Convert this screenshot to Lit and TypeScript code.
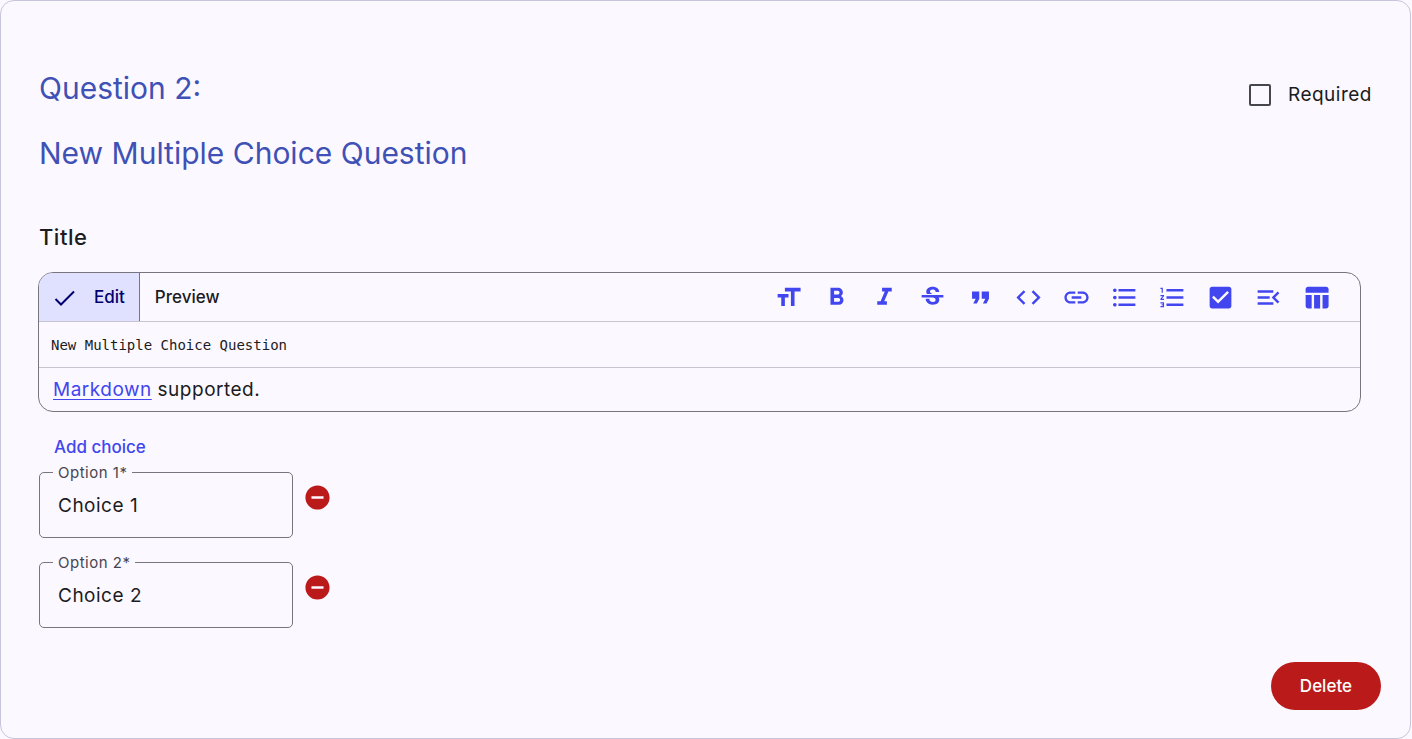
import { LitElement, html, css, svg } from "lit";
import { customElement, property, state } from "lit/decorators.js";

const TOOLS: { name: string; path: string }[] = [
  { name: "Heading", path: "M9 4v3h5v12h3V7h5V4H9zm-6 8h3v7h3v-7h3V9H3v3z" },
  { name: "Bold", path: "M15.6 10.79c.97-.67 1.65-1.77 1.65-2.79 0-2.26-1.75-4-4-4H7v14h7.04c2.09 0 3.71-1.7 3.71-3.79 0-1.52-.86-2.82-2.15-3.42zM10 6.5h3c.83 0 1.5.67 1.5 1.5s-.67 1.5-1.5 1.5h-3v-3zm3.5 9H10v-3h3.5c.83 0 1.5.67 1.5 1.5s-.67 1.5-1.5 1.5z" },
  { name: "Italic", path: "M10 4v3h2.21l-3.42 8H6v3h8v-3h-2.21l3.42-8H18V4z" },
  { name: "Strikethrough", path: "M6.85 7.08C6.85 4.37 9.45 3 12.24 3c1.64 0 3 .49 3.9 1.28.77.65 1.46 1.73 1.46 3.24h-3.01c0-.31-.05-.59-.15-.85-.29-.86-1.2-1.28-2.25-1.28-1.86 0-2.34 1.02-2.34 1.7 0 .48.25.88.74 1.21.38.25.77.48 1.41.7H7.39c-.21-.34-.54-.89-.54-1.92zM21 12v-2H3v2h9.62c1.15.45 1.96.75 1.96 1.97 0 1-.81 1.67-2.28 1.67-1.54 0-2.93-.54-2.93-2.51H6.4c0 .55.08 1.13.24 1.58.81 2.29 3.29 3.3 5.67 3.3 2.27 0 5.3-.89 5.3-4.05 0-.3-.01-1.16-.48-1.94H21V12z" },
  { name: "Quote", path: "M6 17h3l2-4V7H5v6h3zm8 0h3l2-4V7h-6v6h3z" },
  { name: "Code", path: "M9.4 16.6L4.8 12l4.6-4.6L8 6l-6 6 6 6 1.4-1.4zm5.2 0l4.6-4.6-4.6-4.6L16 6l6 6-6 6-1.4-1.4z" },
  { name: "Link", path: "M3.9 12c0-1.71 1.39-3.1 3.1-3.1h4V7H7c-2.76 0-5 2.24-5 5s2.24 5 5 5h4v-1.9H7c-1.71 0-3.1-1.39-3.1-3.1zM8 13h8v-2H8v2zm9-6h-4v1.9h4c1.71 0 3.1 1.39 3.1 3.1s-1.39 3.1-3.1 3.1h-4V17h4c2.76 0 5-2.24 5-5s-2.24-5-5-5z" },
  { name: "Bulleted list", path: "M4 10.5c-.83 0-1.5.67-1.5 1.5s.67 1.5 1.5 1.5 1.5-.67 1.5-1.5-.67-1.5-1.5-1.5zm0-6c-.83 0-1.5.67-1.5 1.5S3.17 7.5 4 7.5 5.5 6.83 5.5 6 4.83 4.5 4 4.5zm0 12c-.83 0-1.5.68-1.5 1.5s.68 1.5 1.5 1.5 1.5-.68 1.5-1.5-.67-1.5-1.5-1.5zM7 19h14v-2H7v2zm0-6h14v-2H7v2zm0-8v2h14V5H7z" },
  { name: "Numbered list", path: "M2 17h2v.5H3v1h1v.5H2v1h3v-4H2v1zm1-9h1V4H2v1h1v3zm-1 3h1.8L2 13.1v.9h3v-1H3.2L5 10.9V10H2v1zm5-6v2h14V5H7zm0 14h14v-2H7v2zm0-6h14v-2H7v2z" },
  { name: "Task list", path: "M19 3H5c-1.11 0-2 .9-2 2v14c0 1.1.89 2 2 2h14c1.11 0 2-.9 2-2V5c0-1.1-.89-2-2-2zm-9 14l-5-5 1.41-1.41L10 14.17l7.59-7.59L19 8l-9 9z" },
  { name: "Collapse", path: "M3 18h13v-2H3v2zm0-5h10v-2H3v2zm0-7v2h13V6H3zm18 9.59L17.42 12 21 8.41 19.59 7l-5 5 5 5L21 15.59z" },
  { name: "Table", path: "M10 10.02h5V21h-5zM17 21h3c1.1 0 2-.9 2-2v-9h-5v11zm3-18H5c-1.1 0-2 .9-2 2v3h19V5c0-1.1-.9-2-2-2zM3 19c0 1.1.9 2 2 2h3V10H3v9z" },
];

const icon = (path: string) => html`<svg viewBox="0 0 24 24" width="29" height="29" fill="currentColor" aria-hidden="true">${svg`<path d=${path}></path>`}</svg>`;

@customElement("markdown-editor")
export class MarkdownEditor extends LitElement {
  @property() value = "";
  @state() private mode: "edit" | "preview" = "edit";

  static styles = css`
    :host { display: block; }
    .editor { border: 1px solid #777680; border-radius: 15px; overflow: hidden; }
    .bar { display: flex; justify-content: space-between; border-bottom: 1px solid #c7c5d0; height: 48px; }
    .tabs, .tools { display: flex; }
    .tools { padding-right: 20px; }
    button { font: inherit; border: 0; padding: 0; background: none; color: inherit; cursor: pointer; }
    .tab { display: flex; align-items: center; padding: 0 15px; font-size: 17px; font-weight: 500; color: #1b1b21; }
    .tab.selected { background: #e0e0ff; color: #00006e; border-right: 1px solid #777680; gap: 19px; padding-right: 14px; }
    .check { width: 21px; height: 21px; }
    .tool { width: 48px; display: grid; place-items: center; color: #4146ef; }
    .source { display: block; width: 100%; height: 46px; box-sizing: border-box; border: 0; border-bottom: 1px solid #c7c5d0;
      padding: 12px; margin: 0; background: none; resize: none; outline: 0; overflow: hidden;
      font: 14px/22px "DejaVu Sans Mono", monospace; color: #1b1b21; }
    .hint { padding: 0 14px; font-size: 19px; line-height: 43px; letter-spacing: 0.5px; }
    .hint a { color: #4146ef; text-decoration: underline 1px; text-underline-offset: 3px; }
  `;

  render() {
    return html`<div class="editor">
      <div class="bar">
        <div class="tabs">
          <button class="tab selected" @click=${() => (this.mode = "edit")}>
            <svg class="check" viewBox="0 0 21 21" fill="none" stroke="currentColor" stroke-width="2" aria-hidden="true"><path d="M1.5 12l5.500 5.500L20 4.500"></path></svg>Edit
          </button>
          <button class="tab" @click=${() => (this.mode = "preview")}>Preview</button>
        </div>
        <div class="tools">
          ${TOOLS.map((t) => html`<button class="tool" aria-label=${t.name}>${icon(t.path)}</button>`)}
        </div>
      </div>
      <textarea class="source" aria-label="Title" rows="1" .value=${this.value} ?readonly=${this.mode === "preview"}></textarea>
      <div class="hint"><a href="#markdown">Markdown</a> supported.</div>
    </div>`;
  }
}

@customElement("app-root")
export class AppRoot extends LitElement {
  @state() private choices = ["Choice 1", "Choice 2"];

  static styles = css`
    :host { display: block; min-height: 100vh; background: #fcf8ff; font-family: Inter, sans-serif; color: #1b1b21; }
    .card { border: 1px solid #c7c5dc; border-radius: 14px; margin-right: 1px; padding: 68px 29px 28px 37px; background: #fcf8ff; }
    .header { display: flex; justify-content: space-between; align-items: flex-start; padding: 0 9px 0 1px; }
    h2 { margin: 0 0 27px; font-size: 30px; line-height: 38px; font-weight: 400; color: #3f51b5; }
    .header h2:last-child { margin: 0; }
    h3 { margin: 50px 0 20px 1px; font-size: 22px; line-height: 30px; font-weight: 500; letter-spacing: 0.5px; }
    .required { display: flex; align-items: center; gap: 17px; margin-top: 11px; font-size: 19px; line-height: 29px; letter-spacing: 0.5px; }
    .required input { appearance: none; width: 22px; height: 22px; margin: 0; border: 2px solid #46464f; border-radius: 2px; }
    .required input:checked { background: #4146ef; border-color: #4146ef; }
    markdown-editor { margin-right: 20px; }
    button { font: inherit; border: 0; padding: 0; background: none; cursor: pointer; }
    .add { display: block; margin: 18px 0 0 16px; height: 34px; font-size: 17px; font-weight: 500; color: #4146ef; }
    .choices { display: grid; gap: 16px; margin-left: 1px; }
    .choice { display: flex; align-items: center; gap: 10px; height: 74px; }
    fieldset { box-sizing: border-box; width: 254px; height: 74px; margin: 0; min-width: 0; border: 1px solid #777680; border-radius: 5px; padding: 0 13px; }
    legend { padding: 0 5px; font-size: 15px; line-height: 17px; letter-spacing: 0.5px; color: #46464f; }
    fieldset input { display: block; width: 100%; height: 48px; box-sizing: border-box; padding: 0 5px; border: 0; outline: 0; background: none;
      font: inherit; font-size: 19px; letter-spacing: 0.5px; color: #1b1b21; }
    .remove { display: grid; margin-bottom: 8px; color: #ba1a1a; }
    .footer { display: flex; justify-content: flex-end; margin-top: 34px; }
    .delete { height: 48px; padding: 0 29px; border-radius: 24px; background: #ba1a1a; color: #fff; font-size: 17px; font-weight: 500; }
  `;

  render() {
    return html`<section class="card">
      <div class="header">
        <div>
          <h2>Question 2:</h2>
          <h2>New Multiple Choice Question</h2>
        </div>
        <label class="required"><input type="checkbox" />Required</label>
      </div>
      <h3>Title</h3>
      <markdown-editor value="New Multiple Choice Question"></markdown-editor>
      <button class="add" @click=${() => (this.choices = [...this.choices, `Choice ${this.choices.length + 1}`])}>Add choice</button>
      <div class="choices">
        ${this.choices.map((choice, i) => html`<div class="choice">
          <fieldset>
            <legend><label for="option-${i}">Option ${i + 1}*</label></legend>
            <input id="option-${i}" type="text" required .value=${choice} />
          </fieldset>
          <button class="remove" aria-label="Remove option ${i + 1}" @click=${() => (this.choices = this.choices.filter((_, n) => n !== i))}>
            ${icon("M12 2C6.48 2 2 6.48 2 12s4.48 10 10 10 10-4.48 10-10S17.52 2 12 2zm5 11H7v-2h10v2z")}
          </button>
        </div>`)}
      </div>
      <div class="footer"><button class="delete">Delete</button></div>
    </section>`;
  }
}
